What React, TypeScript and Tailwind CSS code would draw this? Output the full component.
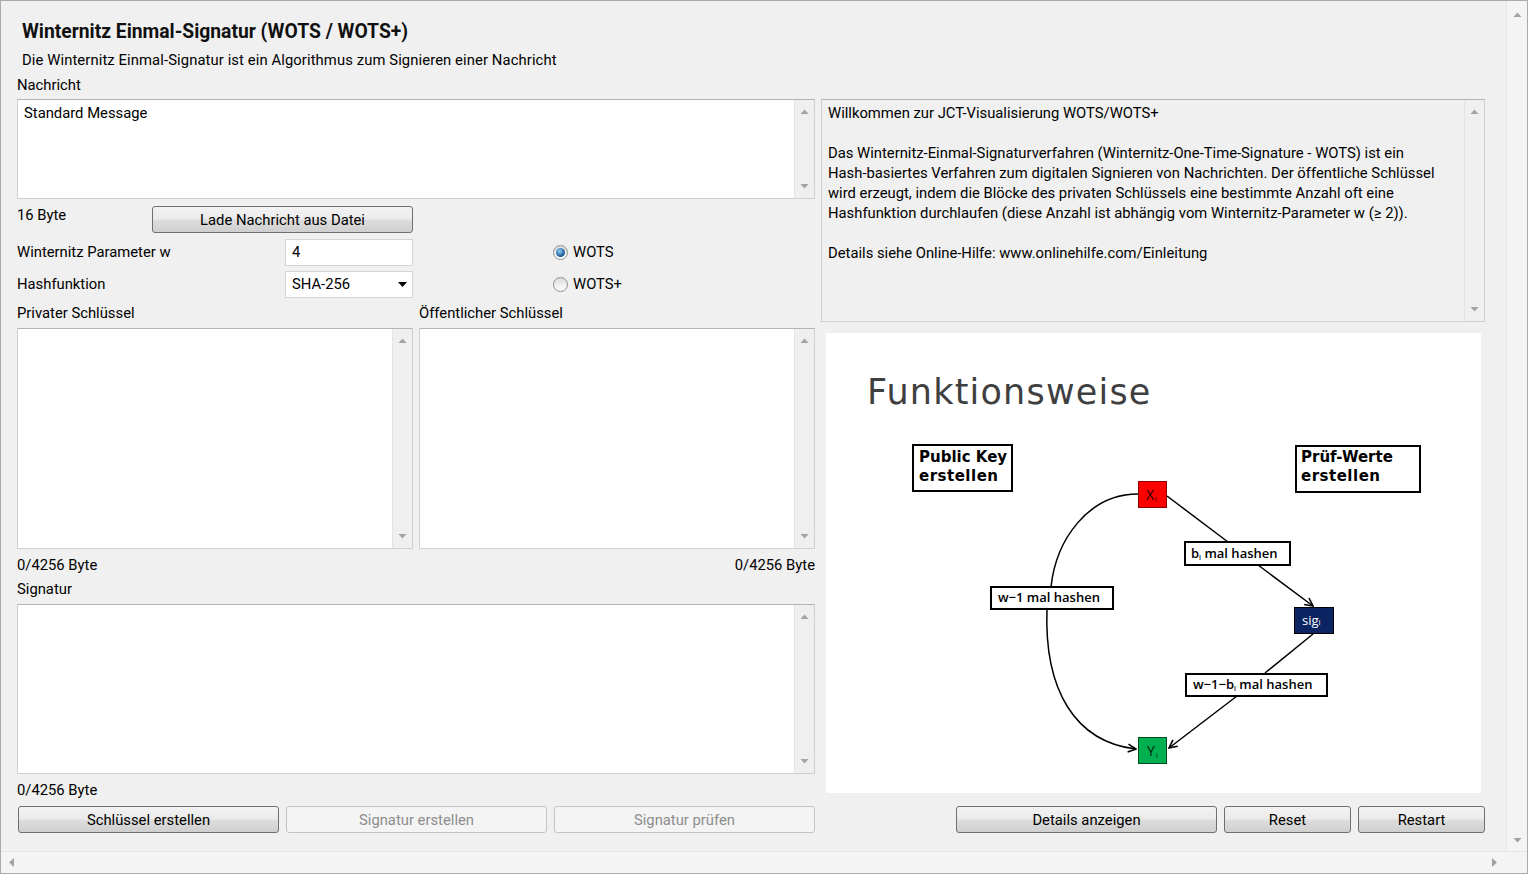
import React from "react";

const UpArrow = () => (
  <svg width="9" height="5" viewBox="0 0 9 5">
    <path d="M0.5 5 L4.5 0.5 L8.5 5 Z" fill="#a3a3a3" />
  </svg>
);

const DownArrow = () => (
  <svg width="9" height="5" viewBox="0 0 9 5">
    <path d="M0.5 0 L4.5 4.5 L8.5 0 Z" fill="#a3a3a3" />
  </svg>
);

const VScroll = () => (
  <div className="w-[20px] h-full bg-[#efefef] border-l border-[#e4e4e4] flex flex-col items-center justify-between py-[9px] shrink-0">
    <UpArrow />
    <DownArrow />
  </div>
);

const TextBox = ({ h, w, children }: { h: string; w?: string; children?: React.ReactNode }) => (
  <div className={`${h} ${w ?? "w-full"} bg-white border border-[#d0d0d0] border-t-[#b4b4b4] flex`}>
    <div className="flex-1 px-[6px] pt-[3px] leading-[20px]">{children}</div>
    <VScroll />
  </div>
);

const Button = ({ label, w, disabled }: { label: string; w: string; disabled?: boolean }) =>
  disabled ? (
    <button className={`${w} h-[27px] rounded-[3px] border border-[#c2c5c7] bg-[#f4f4f4] text-[#8d8d8d] leading-[20px]`}>
      {label}
    </button>
  ) : (
    <button
      className={`${w} h-[27px] rounded-[3px] border border-[#707070] bg-[linear-gradient(#f2f2f2_0%,#ebebeb_48%,#dddddd_52%,#cfcfcf_100%)] text-black leading-[20px]`}
    >
      {label}
    </button>
  );

const Radio = ({ label, checked }: { label: string; checked?: boolean }) => (
  <div className="flex items-center gap-[5px]">
    <div className="w-[15px] h-[15px] rounded-full border border-[#8e8f8f] bg-[linear-gradient(#dcdcdc,#ffffff)] flex items-center justify-center">
      {checked && <div className="w-[9px] h-[9px] rounded-full bg-[radial-gradient(circle_at_40%_35%,#8fd0ff,#17518a_70%)]" />}
    </div>
    <span>{label}</span>
  </div>
);

const sans = "'DejaVu Sans', sans-serif";
const label = "'Open Sans', 'DejaVu Sans', sans-serif";

const Diagram = () => (
  <svg width="655" height="460" viewBox="826 333 655 460" className="block">
    <defs>
      <marker id="arr" markerWidth="10" markerHeight="10" refX="9" refY="5" orient="auto" markerUnits="userSpaceOnUse">
        <path d="M1 1 L9 5 L1 9" fill="none" stroke="#000" strokeWidth="1.6" />
      </marker>
    </defs>
    <text x="867" y="404" fontFamily={sans} fontSize="35" fill="#3f3f3f" letterSpacing="1.2">
      Funktionsweise
    </text>

    <rect x="913" y="445" width="99" height="46" fill="#fff" stroke="#000" strokeWidth="2" />
    <text x="919" y="462" fontFamily={sans} fontWeight="bold" fontSize="15">Public Key</text>
    <text x="919" y="481" fontFamily={sans} fontWeight="bold" fontSize="15" letterSpacing="0.5">erstellen</text>

    <rect x="1296" y="446" width="124" height="46" fill="#fff" stroke="#000" strokeWidth="2" />
    <text x="1301" y="462" fontFamily={sans} fontWeight="bold" fontSize="15">Prüf-Werte</text>
    <text x="1301" y="481" fontFamily={sans} fontWeight="bold" fontSize="15" letterSpacing="0.5">erstellen</text>

    <path d="M1138 494 C1088 494 1056 540 1051 587" fill="none" stroke="#000" strokeWidth="1.5" />
    <path d="M1047 609 C1044 690 1075 742 1136 749" fill="none" stroke="#000" strokeWidth="1.5" markerEnd="url(#arr)" />
    <line x1="1167" y1="496" x2="1228" y2="542" stroke="#000" strokeWidth="1.5" />
    <line x1="1258" y1="565" x2="1313" y2="606" stroke="#000" strokeWidth="1.5" markerEnd="url(#arr)" />
    <line x1="1313" y1="634" x2="1265" y2="673" stroke="#000" strokeWidth="1.5" />
    <line x1="1237" y1="696" x2="1169" y2="748" stroke="#000" strokeWidth="1.5" markerEnd="url(#arr)" />

    <rect x="1138.5" y="481.5" width="28" height="26" fill="#ff0000" stroke="#8b0000" />
    <text x="1146" y="500" fontFamily={label} fontSize="14" fill="#1a0000">X</text>
    <text x="1155" y="502" fontFamily={label} fontSize="7" fill="#1a0000">i</text>

    <rect x="1185" y="542" width="105" height="23" fill="#fff" stroke="#000" strokeWidth="2" />
    <text x="1191" y="558" fontFamily={label} fontSize="13" fontWeight="600">
      b<tspan fontSize="7" dy="2">i</tspan><tspan dy="-2"> mal hashen</tspan>
    </text>

    <rect x="1294.5" y="607.5" width="39" height="26" fill="#0c2461" stroke="#000" />
    <text x="1302" y="625" fontFamily={label} fontSize="13" fill="#fff">sig<tspan fontSize="8">i</tspan></text>

    <rect x="991" y="587" width="122" height="22" fill="#fff" stroke="#000" strokeWidth="2" />
    <text x="998" y="602" fontFamily={label} fontSize="13" fontWeight="600">w−1 mal hashen</text>

    <rect x="1186" y="674" width="141" height="22" fill="#fff" stroke="#000" strokeWidth="2" />
    <text x="1193" y="689" fontFamily={label} fontSize="13" fontWeight="600">
      w−1−b<tspan fontSize="7" dy="2">i</tspan><tspan dy="-2"> mal hashen</tspan>
    </text>

    <rect x="1138.5" y="737.5" width="28" height="26" fill="#00b050" stroke="#004d20" />
    <text x="1147" y="756" fontFamily={label} fontSize="14" fill="#001a0a">Y</text>
    <text x="1156" y="758" fontFamily={label} fontSize="7" fill="#001a0a">i</text>
  </svg>
);

export default function App() {
  return (
    <div className="w-[1528px] h-[874px] border border-[#ababab] bg-[#f0f0f0] flex flex-col overflow-hidden font-['Roboto',sans-serif] text-[14.8px] text-black">
      <div className="flex flex-1 min-h-0">
        <div className="flex-1 pl-[16px] pt-[19px]">
          <h1 className="ml-[5px] text-[19.3px] leading-[24px] font-bold text-[#111]">Winternitz Einmal-Signatur (WOTS / WOTS+)</h1>
          <p className="ml-[5px] mt-[6px] leading-[20px] tracking-[0.1px]">Die Winternitz Einmal-Signatur ist ein Algorithmus zum Signieren einer Nachricht</p>
          <p className="mt-[5px] leading-[20px]">Nachricht</p>

          <div className="flex gap-[6px] mt-[4px]">
            {/* linke Spalte */}
            <div className="w-[798px] flex flex-col">
              <TextBox h="h-[100px]">Standard Message</TextBox>

              <div className="flex h-[27px] mt-[7px]">
                <span className="w-[135px] leading-[18px]">16 Byte</span>
                <Button label="Lade Nachricht aus Datei" w="w-[261px]" />
              </div>

              <div className="flex items-center h-[27px] mt-[6px]">
                <span className="w-[268px]">Winternitz Parameter w</span>
                <div className="w-[128px] h-[27px] bg-white border border-[#d5d5d5] px-[6px] leading-[25px]">4</div>
                <div className="ml-[140px]">
                  <Radio label="WOTS" checked />
                </div>
              </div>

              <div className="flex items-center h-[27px] mt-[5px]">
                <span className="w-[268px]">Hashfunktion</span>
                <div className="w-[128px] h-[27px] bg-white border border-[#d5d5d5] pl-[6px] pr-[5px] leading-[25px] flex justify-between items-center">
                  <span>SHA-256</span>
                  <svg width="9" height="5" viewBox="0 0 9 5">
                    <path d="M0 0 L4.5 5 L9 0 Z" fill="#000" />
                  </svg>
                </div>
                <div className="ml-[140px]">
                  <Radio label="WOTS+" />
                </div>
              </div>

              <div className="flex mt-[6px] leading-[18px]">
                <span className="w-[402px]">Privater Schlüssel</span>
                <span>Öffentlicher Schlüssel</span>
              </div>

              <div className="flex gap-[6px] mt-[6px]">
                <TextBox h="h-[221px]" w="w-[396px]" />
                <TextBox h="h-[221px]" w="w-[396px]" />
              </div>

              <div className="flex justify-between mt-[7px] leading-[18px]">
                <span>0/4256 Byte</span>
                <span>0/4256 Byte</span>
              </div>
              <p className="mt-[6px] leading-[18px]">Signatur</p>
              <div className="mt-[6px]">
                <TextBox h="h-[170px]" />
              </div>
              <p className="mt-[7px] leading-[18px]">0/4256 Byte</p>

              <div className="flex gap-[7px] ml-[1px] mt-[7px]">
                <Button label="Schlüssel erstellen" w="w-[261px]" />
                <Button label="Signatur erstellen" w="w-[261px]" disabled />
                <Button label="Signatur prüfen" w="w-[261px]" disabled />
              </div>
            </div>

            {/* rechte Spalte */}
            <div className="w-[664px] flex flex-col">
              <div className="h-[223px] border border-[#d0d0d0] border-t-[#b4b4b4] bg-[#f0f0f0] flex">
                <div className="flex-1 pl-[6px] pt-[3px] leading-[20px]">
                  <p>Willkommen zur JCT-Visualisierung WOTS/WOTS+</p>
                  <p className="mt-[20px]">
                    Das Winternitz-Einmal-Signaturverfahren (Winternitz-One-Time-Signature - WOTS) ist ein
                    <br />
                    Hash-basiertes Verfahren zum digitalen Signieren von Nachrichten. Der öffentliche Schlüssel
                    <br />
                    wird erzeugt, indem die Blöcke des privaten Schlüssels eine bestimmte Anzahl oft eine
                    <br />
                    Hashfunktion durchlaufen (diese Anzahl ist abhängig vom Winternitz-Parameter w (≥ 2)).
                  </p>
                  <p className="mt-[20px]">Details siehe Online-Hilfe: www.onlinehilfe.com/Einleitung</p>
                </div>
                <VScroll />
              </div>

              <div className="ml-[5px] mt-[11px] w-[655px] h-[460px] bg-white">
                <Diagram />
              </div>

              <div className="flex justify-end gap-[7px] mt-[13px]">
                <Button label="Details anzeigen" w="w-[261px]" />
                <Button label="Reset" w="w-[127px]" />
                <Button label="Restart" w="w-[127px]" />
              </div>
            </div>
          </div>
        </div>
        <div className="w-[21px] bg-[#f4f4f4] border-l border-[#e6e6e6] flex flex-col items-center justify-between pt-[11px] pb-[8px]">
          <UpArrow />
          <DownArrow />
        </div>
      </div>
      <div className="h-[22px] bg-[#f4f4f4] border-t border-[#e6e6e6] flex items-center justify-between pl-[8px] pr-[30px]">
        <svg width="5" height="9" viewBox="0 0 5 9">
          <path d="M5 0 L0 4.5 L5 9 Z" fill="#a3a3a3" />
        </svg>
        <svg width="5" height="9" viewBox="0 0 5 9">
          <path d="M0 0 L5 4.5 L0 9 Z" fill="#a3a3a3" />
        </svg>
      </div>
    </div>
  );
}
